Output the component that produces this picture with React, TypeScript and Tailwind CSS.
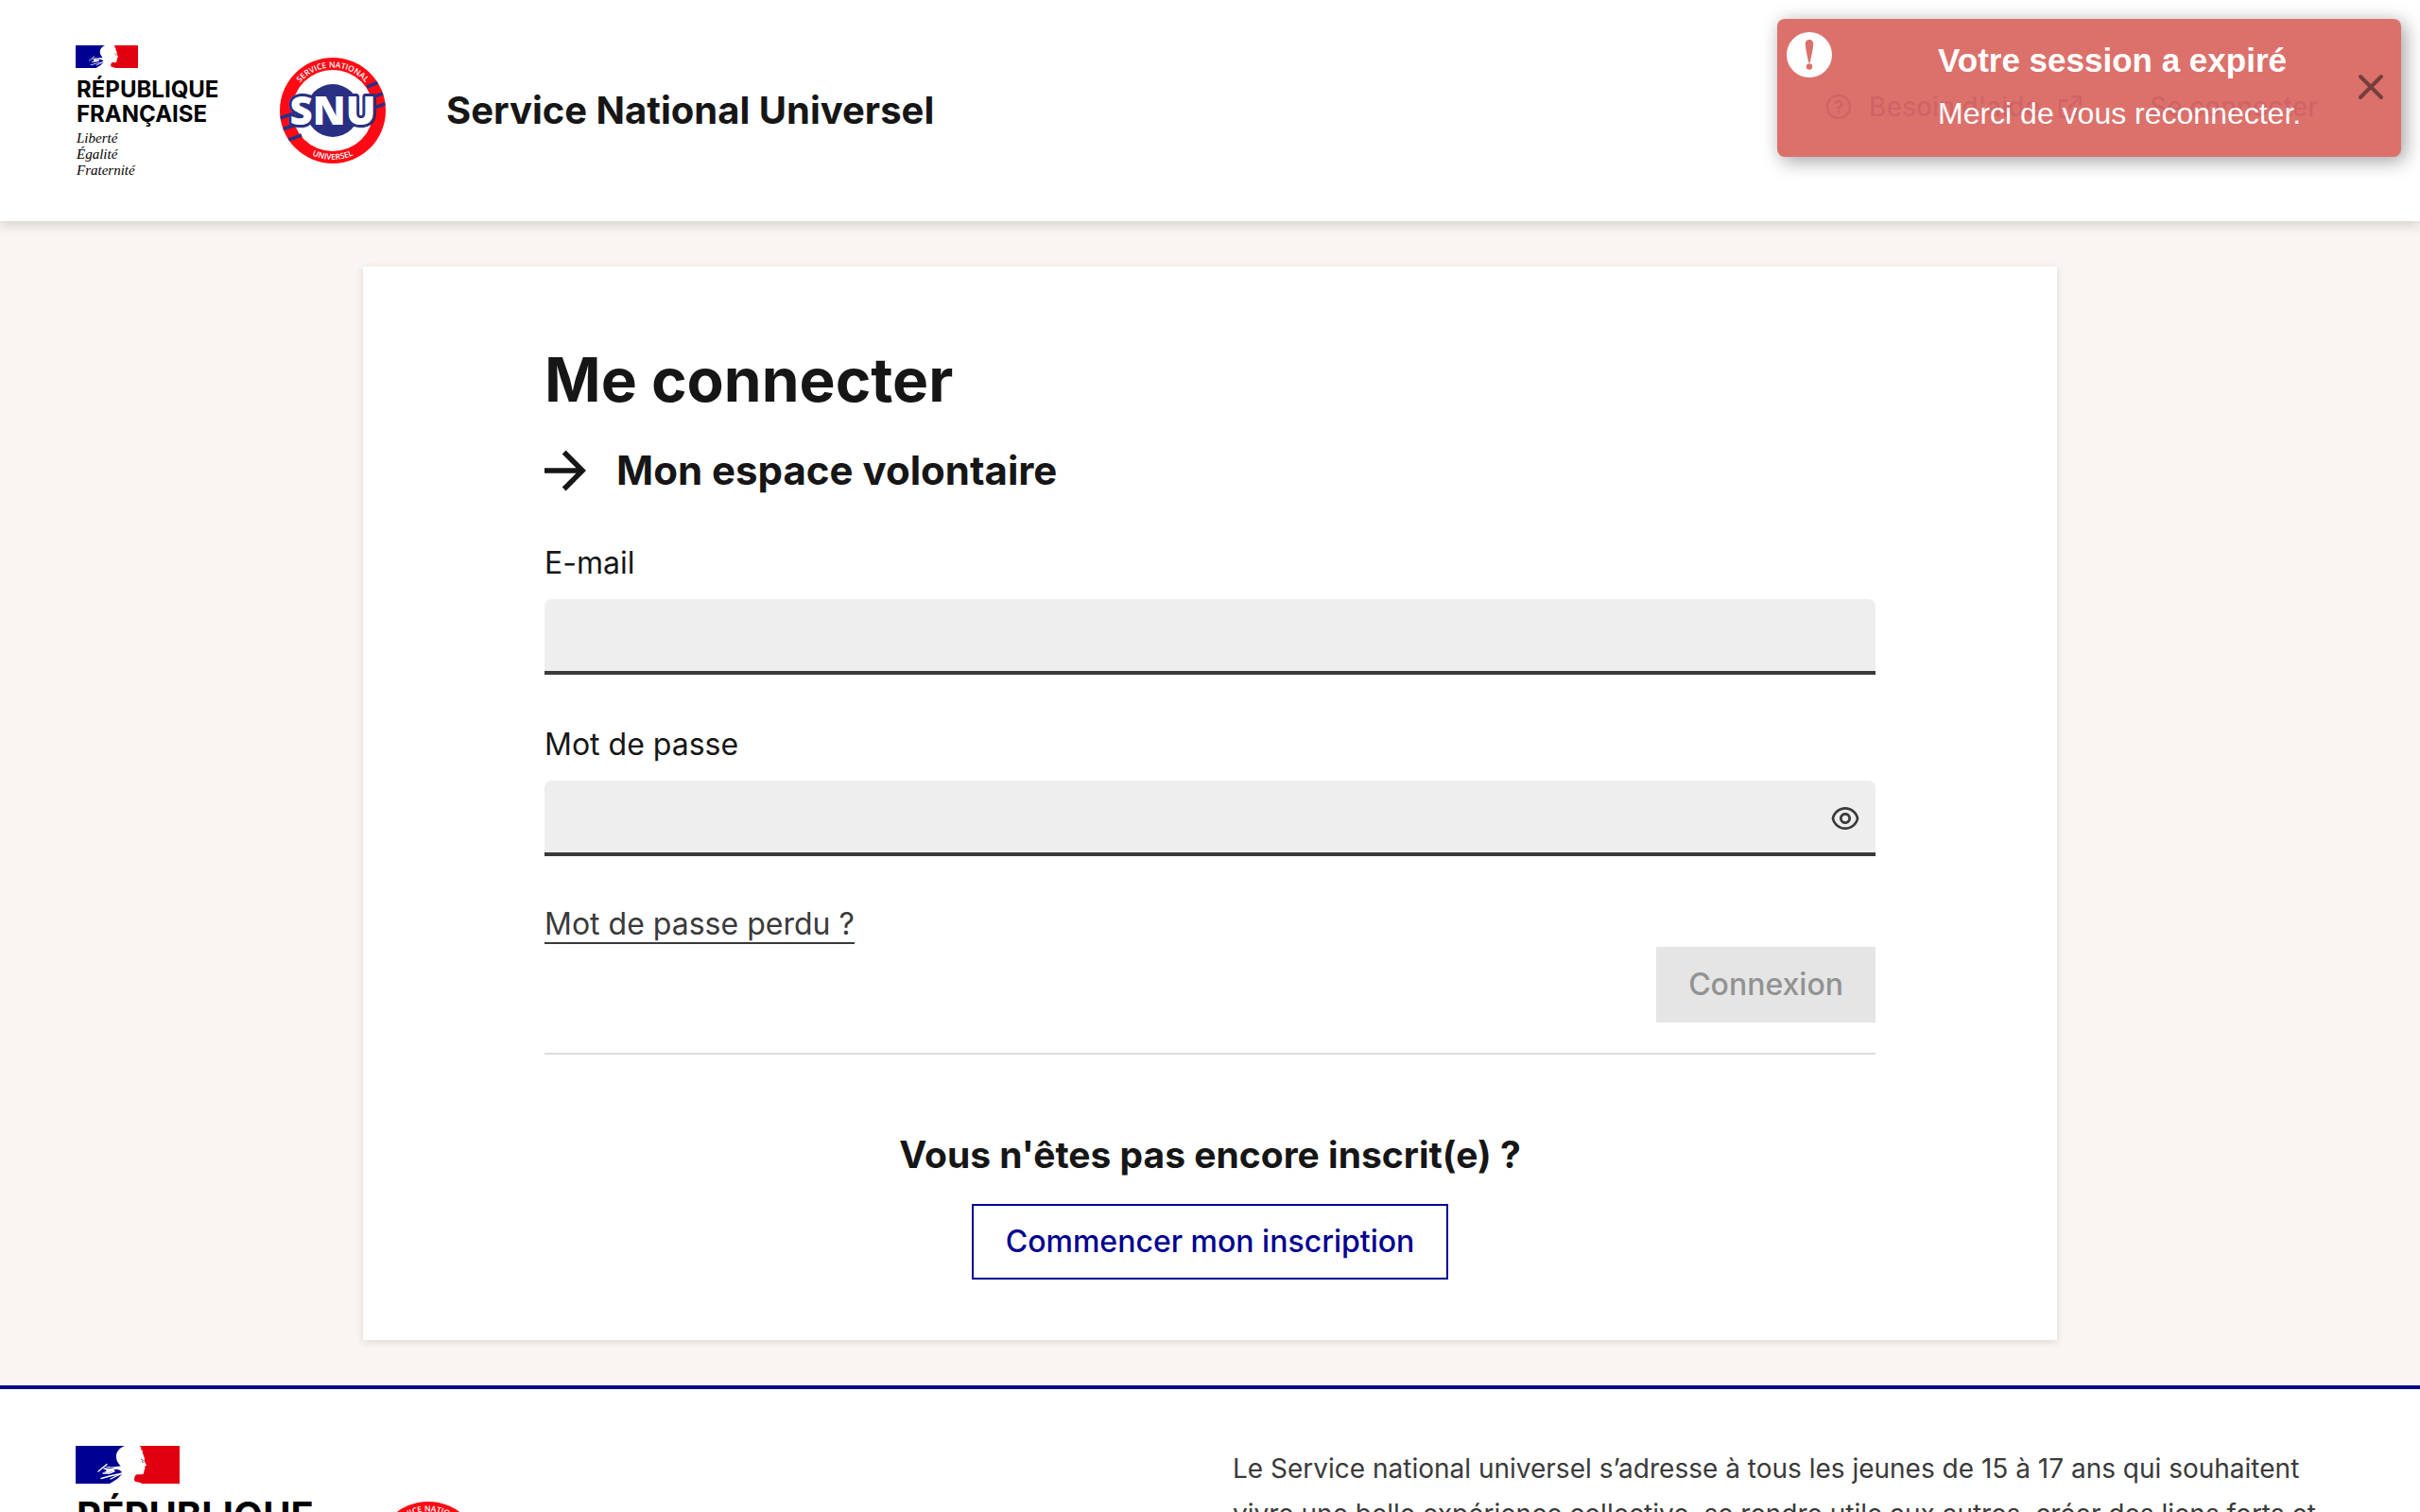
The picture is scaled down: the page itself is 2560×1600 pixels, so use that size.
import React from "react";
import { RiExternalLinkLine, RiEyeLine, RiQuestionLine } from "react-icons/ri";

function Flag({ className }: { className: string }) {
  return (
    <svg viewBox="0 0 110 40" className={className} aria-hidden="true">
      <path fill="#000091" d="M0 0H52C47 2 43.5 5.500 43 10C42.600 14 44 17 46.500 20L48.500 24L46 25L50 29L44 35L36 40H0Z" />
      <path
        fill="#e1000f"
        d="M67.500 0H110V40H70L68.500 39L62.500 37.500C61.500 35 62 32 64 30.500C66.500 29.500 70 31 72 29.500L72.500 26L73.500 24L73 22L75 20.500L72.500 16L73 13.500L71.500 9L70.500 7L71 5L69 4L69.500 2Z"
      />
      <g fill="none" stroke="#fff" strokeWidth="1.300" strokeLinecap="round">
        <path d="M24 27L33 19.500" />
        <path d="M30 24L38 25L47 23" />
        <path d="M27 34.500L36 32L45 30L51 28" />
        <path d="M37 35L43 32L50 29" />
        <path d="M29 29L36 29L41 27" />
      </g>
      <path fill="#fff" d="M29 21L38 22.500L47 21.500L50 25L46 25.500L41 23.800L35 23Z" />
      <path fill="#fff" d="M31 24.500L39 24.500L42 26.500L34 28.500L30 27.500L33 26.500Z" />
      <path fill="none" stroke="#6f6f7d" strokeWidth="1" d="M69 14L71.500 15.500L70 17L72 17.500" />
    </svg>
  );
}

function Republic({ large = false }: { large?: boolean }) {
  return (
    <div className={large ? "w-[253px] shrink-0 text-black" : "-mb-1 w-[152px] shrink-0 text-black"}>
      <Flag className={large ? "h-10 w-[110px]" : "h-6 w-[66px]"} />
      <p
        className={
          large
            ? "mt-3 pl-px text-[40px] leading-[43px] font-bold whitespace-nowrap"
            : "mt-2.5 pl-px text-[24px] leading-[26px] font-bold whitespace-nowrap"
        }
      >
        RÉPUBLIQUE
        <br />
        FRANÇAISE
      </p>
      <p
        className={
          large
            ? "mt-2 font-['Liberation_Serif',serif] text-[25px] leading-[28px] italic"
            : "mt-1 pl-px font-['Liberation_Serif',serif] text-[15px] leading-[17px] italic"
        }
      >
        Liberté
        <br />
        Égalité
        <br />
        Fraternité
      </p>
    </div>
  );
}

function SnuLogo({ id }: { id: string }) {
  return (
    <svg viewBox="0 0 112 112" className="size-28 shrink-0" role="img" aria-label="Service National Universel">
      <defs>
        <path id={`${id}-top`} d="M10.500 56A45.500 45.500 0 0 1 101.500 56" />
        <path id={`${id}-bottom`} d="M4 56A52 52 0 0 0 108 56" />
        <clipPath id={`${id}-disc`}>
          <circle cx="56" cy="56" r="56" />
        </clipPath>
      </defs>
      <circle cx="56" cy="56" r="56" fill="#ff0a14" />
      <circle cx="56" cy="56" r="43" fill="#fff" />
      <g clipPath={`url(#${id}-disc)`} stroke="#293083" strokeWidth="3.500">
        <path d="M-1 64.500L16 58.500M2 76L20 70M8 87.500L23 82M92 31L106 25.500M98 42L113 36.500M100 53L114 48" />
      </g>
      <circle cx="56" cy="56" r="28" fill="#293083" />
      <g fontFamily="'Open Sans', sans-serif" fontWeight="800" textAnchor="middle">
        <text
          x="56"
          y="71"
          fontSize="42"
          fill="#fff"
          stroke="#293083"
          strokeWidth="6"
          strokeLinejoin="round"
          paintOrder="stroke"
        >
          SNU
        </text>
        <g fill="#fff" fontSize="8.500" fontWeight="600">
          <text>
            <textPath href={`#${id}-top`} startOffset="50%">
              SERVICE NATIONAL
            </textPath>
          </text>
          <text>
            <textPath href={`#${id}-bottom`} startOffset="50%">
              UNIVERSEL
            </textPath>
          </text>
        </g>
      </g>
    </svg>
  );
}

function Toast() {
  return (
    <div
      role="alert"
      className="absolute top-5 right-5 flex w-[660px] rounded-lg bg-[#db6a64] pt-5 pb-[22px] font-['Liberation_Sans',sans-serif] text-white opacity-95 shadow-[4px_4px_20px_rgba(0,0,0,0.4)]"
    >
      <svg viewBox="0 0 48 48" className="-mt-1.5 ml-2.5 size-12 shrink-0" aria-hidden="true">
        <circle cx="24" cy="24" r="24" fill="#fff" />
        <path fill="#db6a64" d="M24 8C26.700 8 28.500 10 28.200 13C27.800 19 26 26 25 31C24.700 33 23.300 33 23 31C22 26 20.200 19 19.800 13C19.500 10 21.300 8 24 8Z" />
        <circle cx="24" cy="36.500" r="3.200" fill="#db6a64" />
      </svg>
      <div className="ml-28 flex-1">
        <p className="text-[35px] leading-12 font-bold">Votre session a expiré</p>
        <p className="mt-2 text-[32px] leading-12">Merci de vous reconnecter.</p>
      </div>
      <button type="button" aria-label="Fermer" className="mr-5 self-center">
        <svg viewBox="0 0 24 24" className="size-6 overflow-visible" aria-hidden="true">
          <path d="M1 1L23 23M23 1L1 23" stroke="#000" strokeOpacity="0.5" strokeWidth="4" strokeLinecap="round" />
        </svg>
      </button>
    </div>
  );
}

export default function App() {
  return (
    <div className="relative bg-[#f9f6f2] font-[Inter,sans-serif] text-[#161616]">
      <header className="relative flex items-center gap-16 bg-white px-20 pt-12 pb-[49px] shadow-[0_4px_12px_rgba(0,0,18,0.16)]">
        <Republic />
        <SnuLogo id="header" />
        <p className="text-[40px] leading-14 font-bold">Service National Universel</p>
        <nav className="ml-auto flex items-center gap-10 pb-2 text-[28px] leading-12 font-medium text-[#000091]">
          <a href="#aide" className="flex items-center gap-4">
            <RiQuestionLine className="size-8" />
            Besoin d'aide
            <RiExternalLinkLine className="size-8" />
          </a>
          <a href="#connexion" className="px-7">
            Se connecter
          </a>
        </nav>
      </header>

      <main className="py-12">
        <div className="mx-auto w-[70%] bg-white px-48 pt-20 pb-16 shadow-[0_2px_8px_rgba(0,0,18,0.12)]">
          <form id="connexion">
            <h1 className="text-[64px] leading-20 font-bold">Me connecter</h1>
            <h2 className="mt-7 flex items-center gap-8 text-[42px] leading-14 font-bold">
              <svg viewBox="4 4 16 16" className="size-11" fill="currentColor" aria-hidden="true">
                <path d="M16.170 11L10.810 5.640L12.220 4.220L20 12L12.220 19.780L10.810 18.360L16.170 13H4V11Z" />
              </svg>
              Mon espace volontaire
            </h2>
            <label htmlFor="email" className="mt-[46px] block text-[32px] leading-12">
              E-mail
            </label>
            <input
              id="email"
              type="email"
              className="mt-3.5 block h-20 w-full rounded-t-lg bg-[#eee] px-8 text-[32px] shadow-[inset_0_-4px_0_0_#3a3a3a]"
            />
            <label htmlFor="password" className="mt-[50px] block text-[32px] leading-12">
              Mot de passe
            </label>
            <div className="mt-3.5 flex h-20 items-center rounded-t-lg bg-[#eee] pr-4 shadow-[inset_0_-4px_0_0_#3a3a3a]">
              <input id="password" type="password" className="h-full min-w-0 flex-1 px-8 text-[32px]" />
              <button type="button" aria-label="Afficher le mot de passe" className="text-[#3a3a3a]">
                <RiEyeLine className="size-8" />
              </button>
            </div>
            <p className="mt-12 text-[32px] leading-12 text-[#3a3a3a]">
              <a href="#mot-de-passe" className="border-b-2 border-[#3a3a3a]">
                Mot de passe perdu ?
              </a>
            </p>
            <div className="flex justify-end">
              <button
                type="submit"
                disabled
                className="h-20 bg-[#e5e5e5] px-[34px] text-[32px] font-medium text-[#929292]"
              >
                Connexion
              </button>
            </div>
          </form>
          <hr className="mt-8 border-t-2 border-[#ddd]" />
          <div className="mt-[78px] flex flex-col items-center gap-6">
            <h2 className="text-[39px] leading-14 font-bold">Vous n'êtes pas encore inscrit(e) ?</h2>
            <a
              href="#inscription"
              className="flex h-20 items-center border-2 border-[#000091] px-[34px] text-[32px] font-medium text-[#000091]"
            >
              Commencer mon inscription
            </a>
          </div>
        </div>
      </main>

      <footer className="grid grid-cols-2 gap-12 border-t-4 border-[#000091] bg-white px-20 pt-15 pb-16">
        <div className="flex items-center gap-16">
          <Republic large />
          <SnuLogo id="footer" />
        </div>
        <p className="text-[28px] leading-12 text-[#3a3a3a]">
          Le Service national universel s’adresse à tous les jeunes de 15 à 17 ans qui souhaitent vivre une belle
          expérience collective, se rendre utile aux autres, créer des liens forts et
        </p>
      </footer>

      <Toast />
    </div>
  );
}
